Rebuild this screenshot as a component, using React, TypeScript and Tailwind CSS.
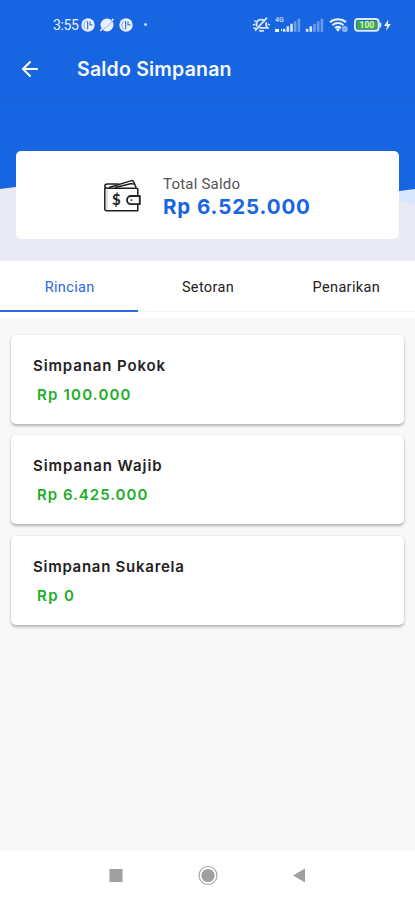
import { ArrowLeft } from "lucide-react"

const tabs = ["Rincian", "Setoran", "Penarikan"]

const savings = [
    { name: "Simpanan Pokok", amount: "Rp 100.000", nameClass: "tracking-[0.88px]", amountClass: "tracking-[1.2px]" },
    { name: "Simpanan Wajib", amount: "Rp 6.425.000", nameClass: "tracking-[0.95px]", amountClass: "tracking-[1px]" },
    { name: "Simpanan Sukarela", amount: "Rp 0", nameClass: "tracking-[0.73px]", amountClass: "tracking-[1.4px]" },
]

function AppBadge() {
    return (
        <svg width="14" height="14" viewBox="0 0 14 14">
            <circle cx="7" cy="7" r="6.7" fill="#e9f1ff" />
            <path d="M5.4 2.6Q2.8 4 2.8 7t2.4 4.4" fill="none" stroke="#6d9dec" strokeWidth="0.9" />
            <path d="M6.6 3v8.2M9 3.6v3.2h2.4" fill="none" stroke="#3a7ae4" strokeWidth="1.2" />
        </svg>
    )
}

function PlanetBadge() {
    return (
        <svg width="16" height="16" viewBox="0 0 16 16">
            <circle cx="8" cy="8" r="6.5" fill="#e9f1ff" />
            <path d="M1.4 13.8 3 12M13 3.5l1.4-1.4" stroke="#e9f1ff" strokeWidth="1.8" />
            <path d="M3.6 12.6Q10 9.5 13.2 4" fill="none" stroke="#8fb4f2" strokeWidth="0.9" />
        </svg>
    )
}

function MutedBell() {
    return (
        <svg width="19" height="17" viewBox="0 0 19 17" fill="none" stroke="#d9e6ff" strokeWidth="1.8" strokeLinecap="round">
            <path d="M4.6 9.8V7.6q0-4 4.6-4 2 0 3 1M14.2 6.8v3l1.5 2H8M7.8 14.8h3.4" />
            <path d="M3.6 14.2 14.6 2.2" />
            <path d="M1.4 9l1.6-.8M16.2 8.2l1.4.6M2.8 4.8l1.4.8M1.8 12.2h1.8" strokeWidth="1.4" />
        </svg>
    )
}

function SignalBars({ strong }: { strong: number }) {
    return (
        <svg width="19" height="14" viewBox="0 0 19 14" fill="#e9f1ff">
            {[0, 1, 2, 3, 4].map((i) => (
                <rect key={i} x={0.8 + i * 3.7} y={10.8 - i * 2.5} width="2.6" height={3 + i * 2.5} opacity={i < strong ? 0.92 : 0.4} />
            ))}
        </svg>
    )
}

function Wifi() {
    return (
        <svg width="20" height="16" viewBox="0 0 20 16" fill="none" stroke="#e9f1ff" strokeWidth="2">
            <path d="M1 5.3a12 12 0 0 1 16 0M3.4 8.2a8.5 8.5 0 0 1 11.2 0M6 11a5 5 0 0 1 6 0" />
            <path d="m9 14.8-2.1-2.5a3 3 0 0 1 4.2 0Z" fill="#e9f1ff" stroke="none" />
            <circle cx="15.8" cy="12" r="3" fill="#91b6f5" stroke="none" />
            <path d="m14.5 12 1 1 1.8-2" stroke="#4b86e8" strokeWidth="1" />
        </svg>
    )
}

function Battery() {
    return (
        <svg width="38" height="14" viewBox="0 0 38 14">
            <rect x="1" y="1.1" width="23.6" height="11.6" rx="3" fill="#1765e0" stroke="#dbe8fb" strokeWidth="2" />
            <rect x="3" y="3" width="19.8" height="7.9" rx="1.2" fill="#45ad32" />
            <path d="M26.3 4.7v4.6" stroke="#dbe8fb" strokeWidth="2" />
            <text x="12.9" y="10" textAnchor="middle" fontSize="8.5" fontWeight="700" fill="#d4f3d5" fontFamily="Roboto, sans-serif">100</text>
            <path d="m34.3 1.4-4.2 6.5h3L31.9 13l5-6.9h-3z" fill="#f3f7ff" />
        </svg>
    )
}

function WalletIcon() {
    return (
        <svg width="40" height="36" viewBox="0 0 40 36" fill="none" stroke="#202020" strokeWidth="1.5" strokeLinejoin="round">
            <path d="M1.8 9v20.8q0 2 2 2h31v-6.6M34.8 18v-7.7q0-1.1-1.5-1.1H4.3Q1.8 9.2 1.8 7.3q0-2.3 2.5-2.3h11.5" />
            <path d="M6 8.5 28.5 1.6q1.5-.4 2 1l2.7 6M12 8.6 28.6 4.6l2 .8" />
            <path d="M36.8 17h-8.7a4.1 4.1 0 0 0 0 8.2h8.7z" strokeWidth="1.8" />
            <circle cx="28.5" cy="21.1" r="0.9" fill="#202020" stroke="none" />
            <path d="M4 10.5v19.5" stroke="#c4c4c4" strokeWidth="1" />
            <text x="13.4" y="26.2" textAnchor="middle" fontSize="15" fontWeight="700" fill="#202020" stroke="none" fontFamily="Lato, sans-serif">$</text>
        </svg>
    )
}

export default function App() {
    return (
        <div className="flex h-[900px] w-[415px] flex-col overflow-hidden bg-[#f8f8f8] font-['Inter',sans-serif]">
            <header className="relative h-[261px] shrink-0 bg-[#e9eaf4]">
                {/* curved blue backdrop */}
                <svg className="absolute inset-0" width="415" height="261" viewBox="0 0 415 261">
                    <path d="M360 100h55v105q-25-6-55-10z" fill="#d8e7fd" />
                    <path d="M0 0h415v189q-60 9-140 1T130 180Q60 180 0 189z" fill="#1765e0" />
                    <path d="M0 97h415v1H0z" fill="#1560da" />
                </svg>
                <div className="relative">
                    <div className="flex h-[49px] items-center pr-[23px] pl-[53px]">
                        <span className="w-[28px] pt-px font-['Roboto',sans-serif] text-[14px] tracking-[-0.4px] text-[#e9f1ff]">3:55</span>
                        <AppBadge />
                        <div className="ml-[4px]"><PlanetBadge /></div>
                        <div className="ml-[4px]"><AppBadge /></div>
                        <i className="ml-[11px] size-[3px] rounded-full bg-[#c4d8fb]" />
                        <div className="ml-auto flex items-center">
                            <MutedBell />
                            <div className="relative ml-[3px] flex w-[27px] justify-end">
                                <span className="absolute -top-[1px] left-[1px] font-['Roboto',sans-serif] text-[7px] leading-[7px] font-bold text-[#b9d0fa]">4G</span>
                                <span className="absolute bottom-0 left-[1px] flex gap-[2px]"><i className="h-[3px] w-[4px] bg-[#e9f1ff]" /><i className="h-[2px] w-[1px] bg-[#e9f1ff]" /></span>
                                <SignalBars strong={3} />
                            </div>
                            <div className="ml-[4px]"><SignalBars strong={2} /></div>
                            <div className="ml-[5px]"><Wifi /></div>
                            <div className="ml-[5px]"><Battery /></div>
                        </div>
                    </div>
                    <div className="flex h-[48px] items-start pt-[8px]">
                        <ArrowLeft className="ml-[18px] size-6 text-white" strokeWidth={2.1} />
                        <h1 className="ml-[35px] text-[19.5px] leading-6 font-semibold tracking-[0.2px] text-[#f6f9ff]">Saldo Simpanan</h1>
                    </div>
                    <div className="mx-[16px] mt-[54px] flex h-[88px] rounded-[5px] bg-white">
                        <div className="mt-[28px] ml-[87px]"><WalletIcon /></div>
                        <div className="ml-[20px] pt-[24px]">
                            <div className="font-['Roboto',sans-serif] text-[15px] leading-[18px] tracking-[0.2px] text-[#555]">Total Saldo</div>
                            <div className="mt-[1px] text-[20.5px] leading-[26px] font-bold tracking-[0.9px] text-[#1765e0]">Rp 6.525.000</div>
                        </div>
                    </div>
                </div>
            </header>

            <nav className="flex h-[57px] shrink-0 bg-white">
                {tabs.map((tab, i) => (
                    <div
                        key={tab}
                        className={`flex h-[51px] flex-1 justify-center pt-[18px] pl-[1px] font-['Roboto',sans-serif] text-[14.5px] leading-[18px] tracking-[0.35px] ${
                            i === 0 ? "border-b-2 border-[#2869e2] text-[#2869e2]" : "border-b border-[#f5f5f5] text-[#222]"
                        }`}
                    >
                        {tab}
                    </div>
                ))}
            </nav>

            <main className="flex flex-1 flex-col gap-[11.5px] px-[11px] pt-[16.5px]">
                {savings.map((item) => (
                    <section key={item.name} className="h-[89px] rounded-[5px] bg-white pt-[21px] pl-[22px] shadow-[0_1.5px_3px_rgba(0,0,0,0.28)]">
                        <h2 className={`text-[15px] leading-[20px] font-semibold text-[#222] ${item.nameClass}`}>{item.name}</h2>
                        <p className={`mt-[9px] ml-[4px] text-[15px] leading-[20px] font-semibold text-[#20ae28] ${item.amountClass}`}>{item.amount}</p>
                    </section>
                ))}
            </main>

            <footer className="flex h-[49px] shrink-0 justify-center bg-white pt-[14px]">
                <svg width="200" height="22" viewBox="0 0 200 22" fill="#9f9f9f">
                    <rect x="1.5" y="4" width="13" height="13" />
                    <circle cx="100" cy="10.5" r="9" fill="none" stroke="#a5a5a5" strokeWidth="1.2" />
                    <circle cx="100" cy="10.5" r="6.6" />
                    <path d="M185 10.5 197 3.5v14z" />
                </svg>
            </footer>
        </div>
    )
}
